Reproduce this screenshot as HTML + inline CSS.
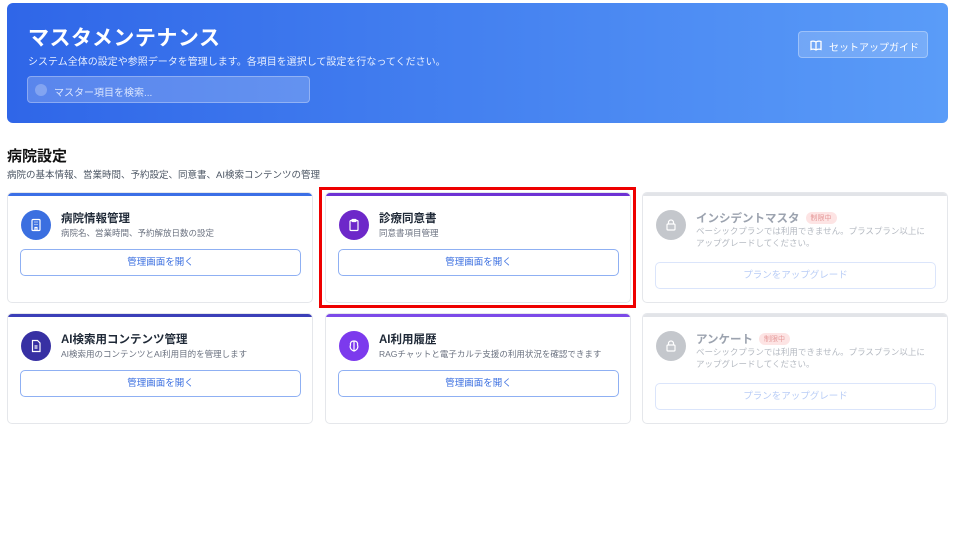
<!DOCTYPE html>
<html><head><meta charset="utf-8"><style>
*{box-sizing:border-box;margin:0;padding:0}
body{width:960px;height:540px;background:#fff;font-family:"Liberation Sans","Noto Sans CJK JP",sans-serif;position:relative;overflow:hidden;color:#1f2937}
.hdr{position:absolute;left:7px;top:3px;width:941px;height:120px;border-radius:6px;background:linear-gradient(90deg,#2f66e8,#5a9cf8)}
.hdr h1{position:absolute;left:21px;top:19px;font-size:21px;color:#fff;font-weight:bold;letter-spacing:0.5px}
.hdr p{position:absolute;left:21px;top:50px;font-size:10px;color:#e6eeff}
.search{position:absolute;left:20px;top:73px;width:283px;height:27px;border-radius:4px;background:rgba(255,255,255,0.2);border:1px solid rgba(255,255,255,0.3)}
.search span{position:absolute;left:26px;top:7px;font-size:10px;color:#dde7ff}
.search i{position:absolute;left:7px;top:7px;width:12px;height:12px;border-radius:50%;background:rgba(255,255,255,0.25)}
.guide{position:absolute;left:791px;top:28px;width:130px;height:27px;border-radius:4px;background:rgba(255,255,255,0.18);border:1px solid rgba(255,255,255,0.3);color:#fff;font-size:10px;padding:7px 0 0 30px}
.guide svg{position:absolute;left:11px;top:8px}
h2{position:absolute;left:7px;top:145px;font-size:15px;font-weight:bold;color:#111}
.sub{position:absolute;left:7px;top:167px;font-size:9.5px;color:#4b5563}
.card{position:absolute;width:306px;height:111px;border:1px solid #e5e7eb;border-radius:5px;background:#fff;overflow:hidden}
.bar{position:absolute;left:0;top:0;right:0;height:3px}
.ic{position:absolute;left:13px;top:17px;width:30px;height:30px;border-radius:50%;display:flex;align-items:center;justify-content:center}
.t{position:absolute;left:53px;top:17px;font-size:11.5px;font-weight:bold;color:#1f2937}
.d{position:absolute;left:53px;top:34px;font-size:8.5px;color:#6b7280;line-height:12px}
.btn{position:absolute;left:12px;top:56px;width:281px;height:27px;border:1px solid #8fb0f3;border-radius:5px;text-align:center;font-size:9.5px;color:#3b6fe0;line-height:25px}
.lock .t{color:#9ca3af}.lock .d{color:#b5bac2;top:32px}
.lock .btn{top:69px;border-color:#dbe5fb;color:#b9cdf6}
.tag{display:inline-block;margin-left:6px;background:#fde4e4;color:#e59a9a;font-size:7px;font-weight:normal;padding:1px 5px;border-radius:7px;vertical-align:2px}
.red{position:absolute;left:319px;top:187px;width:317px;height:121px;border:3px solid #ee0000}
</style></head><body>
<div class="hdr"><h1>マスタメンテナンス</h1><p>システム全体の設定や参照データを管理します。各項目を選択して設定を行なってください。</p>
<div class="search"><i></i><span>マスター項目を検索...</span></div>
<div class="guide"><svg width="12" height="11" viewBox="0 0 12 11" fill="none" stroke="#fff" stroke-width="1.3"><path d="M6 2C4.5 1 2.5 1 1 1.5V9.5C2.5 9 4.5 9 6 10C7.5 9 9.5 9 11 9.5V1.5C9.5 1 7.5 1 6 2Z M6 2V10"/></svg>セットアップガイド</div></div>
<h2>病院設定</h2>
<div class="sub">病院の基本情報、営業時間、予約設定、同意書、AI検索コンテンツの管理</div>

<div class="card" style="left:7px;top:192px"><div class="bar" style="background:#3b6fe6"></div>
<div class="ic" style="background:#3b6fe0"><svg width="14" height="14" viewBox="0 0 14 14" fill="none" stroke="#fff" stroke-width="1.2"><rect x="3" y="1.5" width="8" height="11" rx="1"/><path d="M5.5 4h1M7.5 4h1M5.5 6.5h1M7.5 6.5h1M6 12.5v-3h2v3"/></svg></div>
<div class="t">病院情報管理</div><div class="d">病院名、営業時間、予約解放日数の設定</div><div class="btn">管理画面を開く</div></div>

<div class="card" style="left:325px;top:192px"><div class="bar" style="background:#6d32d4"></div>
<div class="ic" style="background:#6d28c9"><svg width="14" height="14" viewBox="0 0 14 14" fill="none" stroke="#fff" stroke-width="1.2"><rect x="3" y="2.5" width="8" height="10" rx="1"/><rect x="5" y="1.5" width="4" height="2" rx=".5"/></svg></div>
<div class="t">診療同意書</div><div class="d">同意書項目管理</div><div class="btn">管理画面を開く</div></div>

<div class="card lock" style="left:642px;top:192px"><div class="bar" style="background:#e2e4e8"></div>
<div class="ic" style="background:#c4c7cc"><svg width="14" height="14" viewBox="0 0 14 14" fill="none" stroke="#fff" stroke-width="1.2"><rect x="3" y="6" width="8" height="6" rx="1"/><path d="M4.5 6V4.5a2.5 2.5 0 0 1 5 0V6"/></svg></div>
<div class="t">インシデントマスタ<span class="tag">制限中</span></div><div class="d">ベーシックプランでは利用できません。プラスプラン以上に<br>アップグレードしてください。</div><div class="btn">プランをアップグレード</div></div>

<div class="card" style="left:7px;top:313px"><div class="bar" style="background:#3b3fb8"></div>
<div class="ic" style="background:#3730a3"><svg width="14" height="14" viewBox="0 0 14 14" fill="none" stroke="#fff" stroke-width="1.2"><path d="M3.5 1.5h5l2.5 2.5v8.5h-7.5z M5.5 7h3M5.5 9h3"/></svg></div>
<div class="t">AI検索用コンテンツ管理</div><div class="d">AI検索用のコンテンツとAI利用目的を管理します</div><div class="btn">管理画面を開く</div></div>

<div class="card" style="left:325px;top:313px"><div class="bar" style="background:#7c4ae8"></div>
<div class="ic" style="background:#7c3aed"><svg width="14" height="14" viewBox="0 0 14 14" fill="none" stroke="#fff" stroke-width="1.2"><path d="M7 2v10M7 2C4 2 3 4 3.5 6 2.5 8 3.5 11 7 12 10.5 11 11.5 8 10.5 6 11 4 10 2 7 2Z"/></svg></div>
<div class="t">AI利用履歴</div><div class="d">RAGチャットと電子カルテ支援の利用状況を確認できます</div><div class="btn">管理画面を開く</div></div>

<div class="card lock" style="left:642px;top:313px"><div class="bar" style="background:#e2e4e8"></div>
<div class="ic" style="background:#c4c7cc"><svg width="14" height="14" viewBox="0 0 14 14" fill="none" stroke="#fff" stroke-width="1.2"><rect x="3" y="6" width="8" height="6" rx="1"/><path d="M4.5 6V4.5a2.5 2.5 0 0 1 5 0V6"/></svg></div>
<div class="t">アンケート<span class="tag">制限中</span></div><div class="d">ベーシックプランでは利用できません。プラスプラン以上に<br>アップグレードしてください。</div><div class="btn">プランをアップグレード</div></div>

<div class="red"></div>
</body></html>
